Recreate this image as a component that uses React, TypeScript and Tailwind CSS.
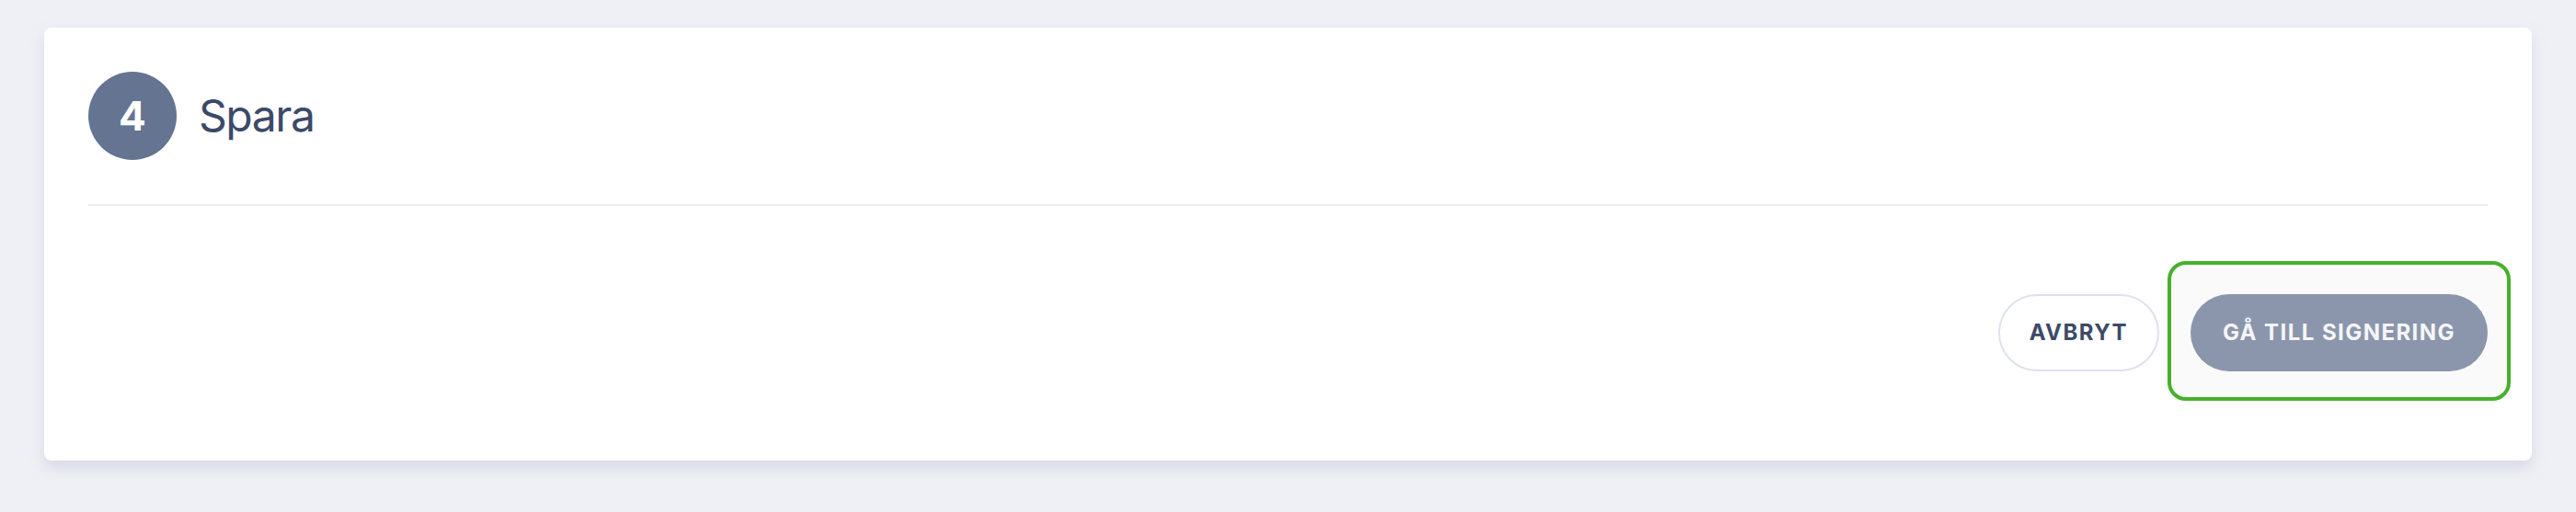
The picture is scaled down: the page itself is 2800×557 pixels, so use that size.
const font = { fontFamily: "Inter, 'Noto Sans', sans-serif" };

function StepHeader({ step, title }: { step: number; title: string }) {
  return (
    <div className="flex items-center gap-[24px]">
      <div className="flex h-[96px] w-[96px] items-center justify-center rounded-full bg-[#647491] text-[44px] font-bold leading-none text-white">
        {step}
      </div>
      <h2 className="text-[48px] font-normal leading-none tracking-[-0.03em] text-[#3d4a67]">{title}</h2>
    </div>
  );
}

export default function App() {
  return (
    <div className="min-h-[557px] bg-[#eff0f5] px-[48px] pt-[30px]" style={font}>
      <div className="rounded-[8px] bg-white px-[48px] pt-[48px] shadow-[0_8px_14px_rgba(196,201,218,0.55)]">
        <StepHeader step={4} title="Spara" />

        <div className="mt-[48px] h-[2px] bg-[#eceef4]" />

        <div className="flex items-center justify-end gap-[34px] pb-[97px] pt-[96px]">
          <button className="h-[84px] rounded-full border-2 border-[#dde2ee] bg-white px-[32px] text-[24px] font-bold uppercase tracking-[0.06em] text-[#3d4a67]">
            Avbryt
          </button>
          <div className="relative">
            <div className="absolute -bottom-[32px] -left-[25px] -right-[25px] -top-[36px] rounded-[20px] border-4 border-[#46b12b] bg-[#fafafa]" />
            <button className="relative h-[84px] rounded-full bg-[#8b96ac] px-[35px] text-[24px] font-bold uppercase tracking-[0.06em] text-[#f5f6f8]">
              Gå till signering
            </button>
          </div>
        </div>
      </div>
    </div>
  );
}
